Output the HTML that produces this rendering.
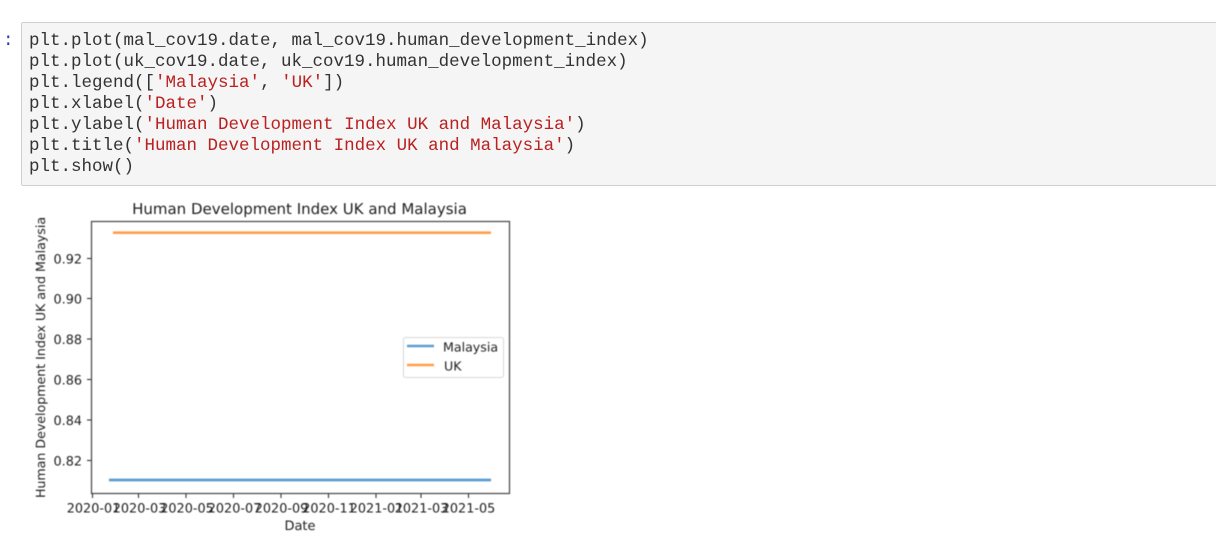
<!DOCTYPE html>
<html>
<head>
<meta charset="utf-8">
<style>
html,body{margin:0;padding:0;background:#fff;width:1216px;height:549px;overflow:hidden;position:relative}
#p{position:absolute;left:3px;top:31px;font:17.5px/21px "Liberation Mono",monospace;color:#303f9f;filter:blur(.3px)}
#cell{position:absolute;left:21px;top:22px;width:1200px;height:162px;background:#f5f5f5;border:1px solid #cfcfcf;border-radius:2px;box-sizing:content-box}
pre{position:absolute;left:7px;top:8px;margin:0;font:17.5px/21px "Liberation Mono",monospace;color:#333;filter:blur(.3px)}
pre b{font-weight:normal;color:#ba2121}
svg{position:absolute;left:0;top:0;filter:blur(.4px)}
text{font-family:"DejaVu Sans",sans-serif;fill:#1c1c1c;text-rendering:geometricPrecision}
</style>
</head>
<body>
<div id="p">:</div>
<div id="cell"><pre>plt.plot(mal_cov19.date, mal_cov19.human_development_index)
plt.plot(uk_cov19.date, uk_cov19.human_development_index)
plt.legend([<b>'Malaysia'</b>, <b>'UK'</b>])
plt.xlabel(<b>'Date'</b>)
plt.ylabel(<b>'Human Development Index UK and Malaysia'</b>)
plt.title(<b>'Human Development Index UK and Malaysia'</b>)
plt.show()</pre></div>
<svg width="1216" height="549" viewBox="0 0 1216 549">
  <text x="299.5" y="214" font-size="15" text-anchor="middle">Human Development Index UK and Malaysia</text>
  <rect x="91.5" y="221.5" width="418" height="272" fill="#fff" stroke="#444" stroke-width="1.2"/>
  <line x1="113" y1="232.7" x2="491" y2="232.7" stroke="#ff9e4a" stroke-width="2.6"/>
  <line x1="109" y1="480" x2="491" y2="480" stroke="#5b9bd0" stroke-width="2.8"/>
  <g stroke="#333" stroke-width="1.1">
    <line x1="87" y1="258.5" x2="91" y2="258.5"/>
    <line x1="87" y1="298.5" x2="91" y2="298.5"/>
    <line x1="87" y1="339" x2="91" y2="339"/>
    <line x1="87" y1="379.5" x2="91" y2="379.5"/>
    <line x1="87" y1="420" x2="91" y2="420"/>
    <line x1="87" y1="460.5" x2="91" y2="460.5"/>
    <line x1="92.5" y1="494" x2="92.5" y2="498"/>
    <line x1="138.5" y1="494" x2="138.5" y2="498"/>
    <line x1="186" y1="494" x2="186" y2="498"/>
    <line x1="233.5" y1="494" x2="233.5" y2="498"/>
    <line x1="281" y1="494" x2="281" y2="498"/>
    <line x1="328.5" y1="494" x2="328.5" y2="498"/>
    <line x1="376" y1="494" x2="376" y2="498"/>
    <line x1="421" y1="494" x2="421" y2="498"/>
    <line x1="468.5" y1="494" x2="468.5" y2="498"/>
  </g>
  <g font-size="12.8" text-anchor="end">
    <text x="82" y="263.5">0.92</text>
    <text x="82" y="303.5">0.90</text>
    <text x="82" y="344">0.88</text>
    <text x="82" y="384.5">0.86</text>
    <text x="82" y="425">0.84</text>
    <text x="82" y="465.5">0.82</text>
  </g>
  <g font-size="12.8" text-anchor="middle">
    <text x="93.5" y="512.5">2020-01</text>
    <text x="139.5" y="512.5">2020-03</text>
    <text x="187" y="512.5">2020-05</text>
    <text x="234.5" y="512.5">2020-07</text>
    <text x="281.5" y="512.5">2020-09</text>
    <text x="329" y="512.5">2020-11</text>
    <text x="376.5" y="512.5">2021-01</text>
    <text x="421.5" y="512.5">2021-03</text>
    <text x="468.5" y="512.5">2021-05</text>
  </g>
  <text x="300" y="530" font-size="13" text-anchor="middle">Date</text>
  <text transform="translate(45,357.5) rotate(-90)" font-size="12.6" text-anchor="middle">Human Development Index UK and Malaysia</text>
  <rect x="403.5" y="337.5" width="100" height="40" rx="2" fill="#fff" stroke="#d8d8d8"/>
  <line x1="407" y1="346" x2="434" y2="346" stroke="#5b9bd0" stroke-width="2.4"/>
  <line x1="407" y1="365" x2="434" y2="365" stroke="#ff9e4a" stroke-width="2.4"/>
  <text x="443" y="351.5" font-size="12.6">Malaysia</text>
  <text x="444" y="370.5" font-size="12.6">UK</text>
</svg>
</body>
</html>
